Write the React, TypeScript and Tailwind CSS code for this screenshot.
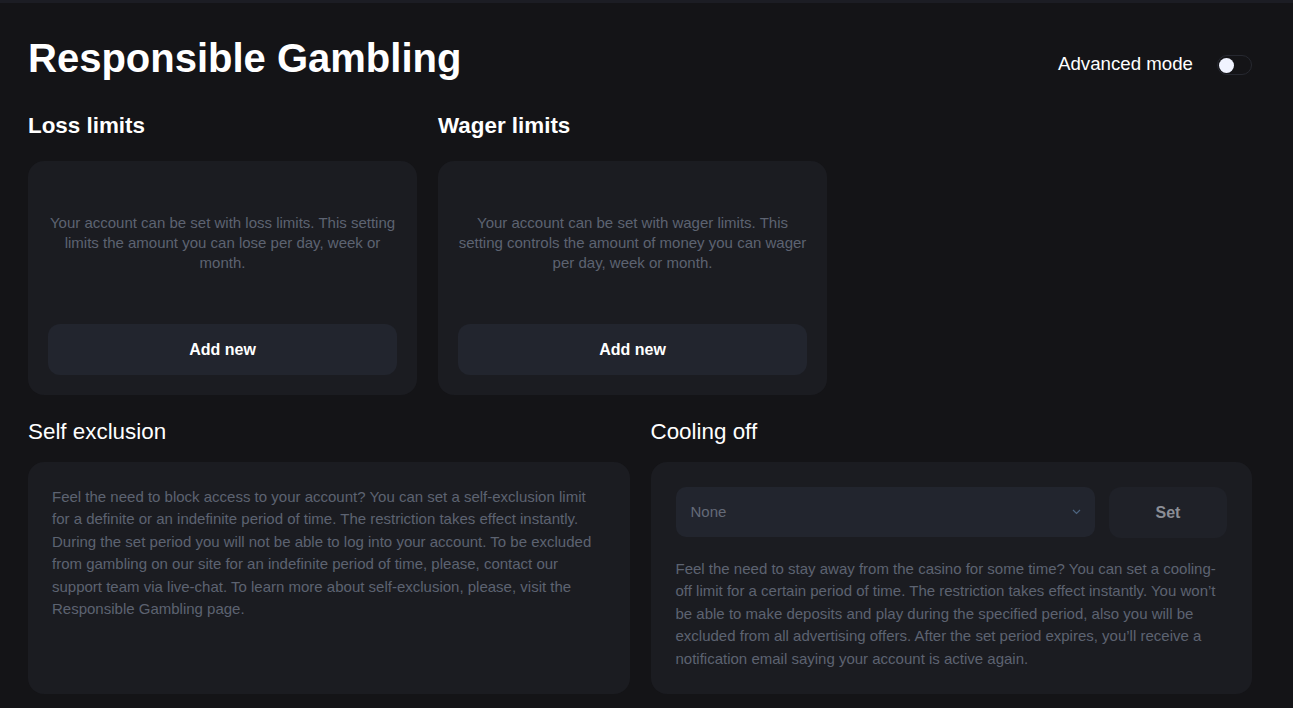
import { useState } from "react"

const font = { fontFamily: '"Liberation Sans", Arial, sans-serif' }

function LimitCard({ text }: { text: string }) {
  return (
    <div className="w-[389px] h-[234px] rounded-[16px] bg-[#1b1c21] p-5 flex flex-col">
      <div className="flex-1 flex items-center justify-center pb-5">
        <p className="text-center text-[15px] leading-[20px] text-[#5d6371]">{text}</p>
      </div>
      <button className="h-[51px] w-full rounded-[12px] bg-[#22252e] text-white text-[16px] font-bold">
        Add new
      </button>
    </div>
  )
}

export default function App() {
  const [advanced, setAdvanced] = useState(false)

  return (
    <div className="min-h-screen bg-[#141417] text-white" style={font}>
      <div className="h-[3px] bg-[#1c1d24]" />
      <div className="pl-[28px] pr-[41px] pt-[31px]">
        {/* Header */}
        <div className="flex items-start justify-between">
          <h1 className="text-[40px] leading-[48px] font-bold">Responsible Gambling</h1>
          <div className="mt-[16px] flex items-center gap-6">
            <span className="text-[18.7px] leading-[28px]">Advanced mode</span>
            <button
              onClick={() => setAdvanced(!advanced)}
              className="w-[35px] h-[20px] rounded-full border border-[#262830] flex items-center px-[1px] mt-[2px]"
            >
              <span className={`w-[15px] h-[15px] rounded-full bg-[#f0f3ff] ${advanced ? "ml-auto" : ""}`} />
            </button>
          </div>
        </div>

        {/* Limits */}
        <div className="mt-[30px] flex gap-[21px]">
          <div>
            <h2 className="text-[22.4px] leading-[28px] font-bold mb-[21px]">Loss limits</h2>
            <LimitCard text="Your account can be set with loss limits. This setting limits the amount you can lose per day, week or month." />
          </div>
          <div>
            <h2 className="text-[22.4px] leading-[28px] font-bold mb-[21px]">Wager limits</h2>
            <LimitCard text="Your account can be set with wager limits. This setting controls the amount of money you can wager per day, week or month." />
          </div>
        </div>

        {/* Exclusion */}
        <div className="mt-[23px] grid grid-cols-2 gap-x-[21px]">
          <h2 className="text-[22.4px] leading-[28px] mb-[16px]">Self exclusion</h2>
          <h2 className="text-[22.4px] leading-[28px] mb-[16px]">Cooling off</h2>

          <div className="rounded-[16px] bg-[#1b1c21] p-6">
            <p className="text-[15px] leading-[22.4px] text-[#5d6371]">
              Feel the need to block access to your account? You can set a self-exclusion limit for a definite or an
              indefinite period of time. The restriction takes effect instantly. During the set period you will not be
              able to log into your account. To be excluded from gambling on our site for an indefinite period of time,
              please, contact our support team via live-chat. To learn more about self-exclusion, please, visit the
              Responsible Gambling page.
            </p>
          </div>

          <div className="rounded-[16px] bg-[#1b1c21] px-[25px] pt-[25px] pb-6">
            <div className="flex gap-[14px]">
              <div className="flex-1 h-[50px] rounded-[10px] bg-[#22252e] flex items-center justify-between pl-[15px] pr-[14px]">
                <span className="text-[15px] text-[#646a78]">None</span>
                <svg width="9" height="6" viewBox="0 0 9 6" fill="none">
                  <path d="M1 1l3.5 3.5L8 1" stroke="#4d6580" strokeWidth="1.2" />
                </svg>
              </div>
              <button className="w-[118px] h-[51px] rounded-[12px] bg-[#1f2128] text-[16px] font-bold text-[#8b8e96]">
                Set
              </button>
            </div>
            <p className="mt-[20px] text-[15px] leading-[22.4px] text-[#5d6371]">
              Feel the need to stay away from the casino for some time? You can set a cooling-off limit for a certain
              period of time. The restriction takes effect instantly. You won’t be able to make deposits and play during
              the specified period, also you will be excluded from all advertising offers. After the set period expires,
              you’ll receive a notification email saying your account is active again.
            </p>
          </div>
        </div>
      </div>
    </div>
  )
}
